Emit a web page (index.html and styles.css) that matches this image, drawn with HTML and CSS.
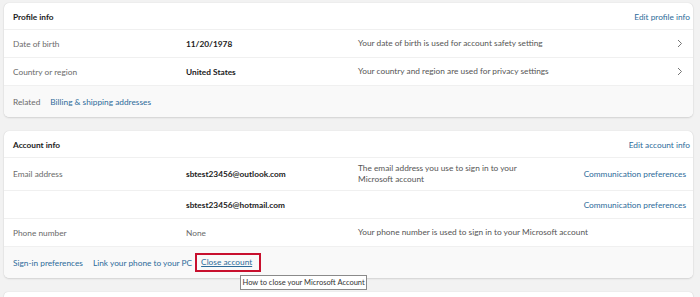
FILE: index.html
```html
<!DOCTYPE html>
<html>
<head>
<meta charset="utf-8">
<link rel="stylesheet" href="styles.css">
</head>
<body>
<div class="page">
  <section class="card">
    <div class="card-head">
      <span class="title">Profile info</span>
      <a class="link">Edit profile info</a>
    </div>
    <div class="row">
      <span class="label">Date of birth</span>
      <span class="value">11/20/1978</span>
      <span class="desc">Your date of birth is used for account safety setting</span>
      <span class="chev"><svg width="7" height="9" viewBox="0 0 7 9"><path d="M2 1 L5.5 4.5 L2 8" fill="none" stroke="#666" stroke-width="0.9"/></svg></span>
    </div>
    <div class="row">
      <span class="label">Country or region</span>
      <span class="value">United States</span>
      <span class="desc">Your country and region are used for privacy settings</span>
      <span class="chev"><svg width="7" height="9" viewBox="0 0 7 9"><path d="M2 1 L5.5 4.5 L2 8" fill="none" stroke="#666" stroke-width="0.9"/></svg></span>
    </div>
    <div class="card-foot">
      <span class="label-foot">Related</span>
      <a class="link">Billing &amp; shipping addresses</a>
    </div>
  </section>

  <section class="card">
    <div class="card-head">
      <span class="title">Account info</span>
      <a class="link">Edit account info</a>
    </div>
    <div class="row row-tall">
      <span class="label">Email address</span>
      <span class="value">sbtest23456@outlook.com</span>
      <span class="desc">The email address you use to sign in to your<br>Microsoft account</span>
      <a class="link side">Communication preferences</a>
    </div>
    <div class="row">
      <span class="label"></span>
      <span class="value">sbtest23456@hotmail.com</span>
      <span class="desc"></span>
      <a class="link side">Communication preferences</a>
    </div>
    <div class="row">
      <span class="label">Phone number</span>
      <span class="value plain">None</span>
      <span class="desc">Your phone number is used to sign in to your Microsoft account</span>
      <span></span>
    </div>
    <div class="card-foot">
      <a class="link">Sign-in preferences</a>
      <a class="link">Link your phone to your PC</a>
      <span class="close-wrap">
        <a class="link underline">Close account</a>
        <span class="tooltip">How to close your Microsoft Account</span>
      </span>
    </div>
  </section>

  <section class="card card-next"></section>
</div>
</body>
</html>
```

FILE: styles.css
```css
* { box-sizing: border-box; margin: 0; padding: 0; }
html, body {
  width: 700px;
  height: 297px;
  overflow: hidden;
  background: #f2f2f2;
  font-family: "Lato", "Noto Sans", sans-serif;
  font-size: 8.3px;
  color: #1b1b1b;
}
.page {
  display: flex;
  flex-direction: column;
  gap: 14px;
  height: 297px;
  overflow: hidden;
  padding: 3px 7px 0 4px;
}
.card {
  flex: none;
  background: #fff;
  border-radius: 5px;
  box-shadow: 0 0 1px rgba(0,0,0,0.18), 0 1px 2px rgba(0,0,0,0.12);
}
.card-head {
  height: 27px;
  display: flex;
  align-items: center;
  justify-content: space-between;
  padding: 2px 3px 0 9px;
  border-bottom: 1px solid #f0f0f0;
}
.title {
  font-weight: 700;
  color: #1b1b1b;
}
.link {
  color: #2d6b9a;
  text-decoration: none;
}
.row {
  display: grid;
  grid-template-columns: 173px 172px 1fr auto;
  align-items: center;
  height: 28px;
  padding: 0 7px 0 9px;
  border-bottom: 1px solid #f0f0f0;
}
.row-tall { height: 33px; }
.label { color: #6a6a6a; }
.value { font-weight: 700; color: #1b1b1b; }
.value.plain { font-weight: 400; color: #6a6a6a; }
.desc { color: #555; line-height: 11px; }
.chev { display: flex; align-items: center; padding-right: 3px; }
.card-foot {
  height: 31px;
  display: flex;
  align-items: center;
  gap: 10px;
  padding: 0 9px;
  background: #f9f9f9;
  border-radius: 0 0 5px 5px;
}
.label-foot { color: #6a6a6a; }
.close-wrap {
  position: relative;
  margin-left: -7px;
  padding: 2px 7px 2px 4px;
  line-height: 11px;
  border: 2px solid #c8102e;
}
.underline { text-decoration: underline; }
.tooltip {
  position: absolute;
  left: 43px;
  top: 20px;
  width: 127px;
  height: 15px;
  display: flex;
  align-items: center;
  justify-content: center;
  white-space: nowrap;
  background: #fff;
  border: 1px solid #8a8a8a;
  font-size: 7.5px;
  color: #333;
  z-index: 2;
}
.card-next { height: 8px; }
```
